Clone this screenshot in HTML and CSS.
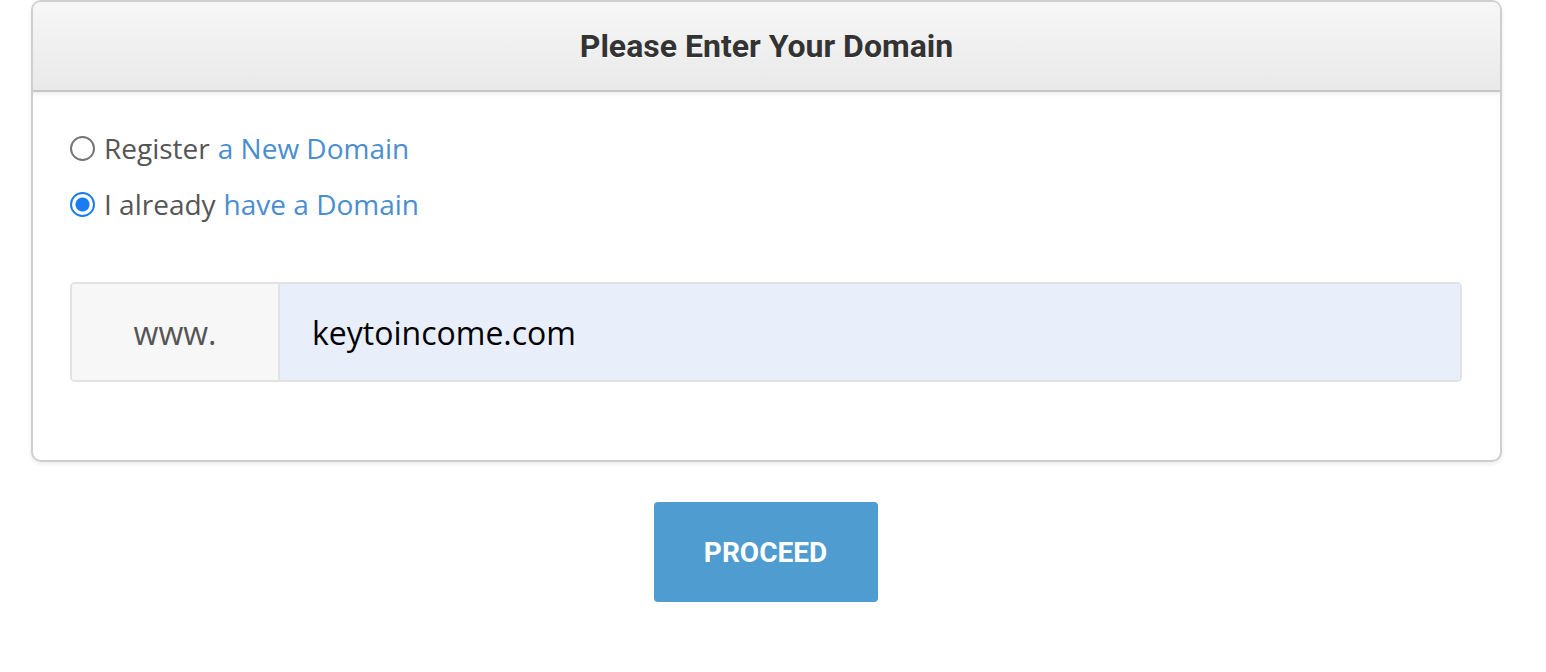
FILE: index.html
```html
<!DOCTYPE html>
<html>
<head>
<meta charset="utf-8">
<link rel="stylesheet" href="styles.css">
</head>
<body>
<div class="page">
  <div class="card">
    <div class="card-header">Please Enter Your Domain</div>
    <div class="card-body">
      <label class="option"><span class="radio"></span><span>Register</span><a class="link">a New Domain</a></label>
      <label class="option"><span class="radio checked"></span><span>I already</span><a class="link">have a Domain</a></label>
      <div class="domain">
        <div class="prefix">www.</div>
        <div class="field">keytoincome.com</div>
      </div>
    </div>
  </div>
  <div class="actions">
    <button class="btn">PROCEED</button>
  </div>
</div>
</body>
</html>
```
FILE: styles.css
```css
html, body { margin: 0; padding: 0; background: #fff; }
.page { padding: 0 44px 0 31px; width: 1471px; }
.card {
  border: 2px solid #cfcfcf;
  border-radius: 10px;
  box-shadow: 0 2px 4px rgba(0,0,0,0.08);
  background: #fff;
  overflow: hidden;
}
.card-header {
  height: 88px;
  background: linear-gradient(#f7f7f7, #e9e9e9);
  border-bottom: 2px solid #c6c6c6;
  font-family: Roboto, "Liberation Sans", sans-serif;
  font-weight: 700;
  font-size: 32px;
  color: #333;
  text-shadow: 0 1px 0 #fff;
  display: flex;
  align-items: center;
  justify-content: center;
}
.card-body {
  padding: 28px 38px 78px 37px;
  box-shadow: inset 0 6px 6px -6px rgba(0,0,0,0.12);
  font-family: "Open Sans", sans-serif;
}
.option {
  display: flex;
  align-items: center;
  font-size: 28px;
  color: #555;
  height: 56px;
}
.link { color: #4a8ed0; margin-left: 8px; }
.radio {
  width: 21px; height: 21px;
  border: 2px solid #767676;
  border-radius: 50%;
  margin-right: 9px;
  box-sizing: content-box;
  flex: none;
}
.radio.checked {
  border: 2px solid #1a7cf2;
  width: 21px; height: 21px;
  background: radial-gradient(circle, #1a7cf2 0 6.5px, #fff 7.5px);
}
.domain {
  margin-top: 50px;
  display: flex;
  height: 96px;
  border: 2px solid #e2e2e2;
  border-radius: 5px;
  overflow: hidden;
}
.prefix {
  width: 206px;
  background: #f7f7f7;
  border-right: 2px solid #e2e2e2;
  display: flex; align-items: center; justify-content: center;
  font-size: 32px;
  color: #555;
}
.field {
  flex: 1;
  background: #e8effb;
  display: flex; align-items: center;
  padding-left: 32px;
  font-size: 32px;
  color: #000;
}
.actions { display: flex; justify-content: center; padding-top: 40px; }
.btn {
  width: 224px; height: 100px;
  background: #4f9cd0;
  border: none;
  border-radius: 4px;
  color: #fff;
  font-family: Roboto, "Liberation Sans", sans-serif;
  font-weight: 700;
  font-size: 28px;
  margin-right: 2px;
}
```
